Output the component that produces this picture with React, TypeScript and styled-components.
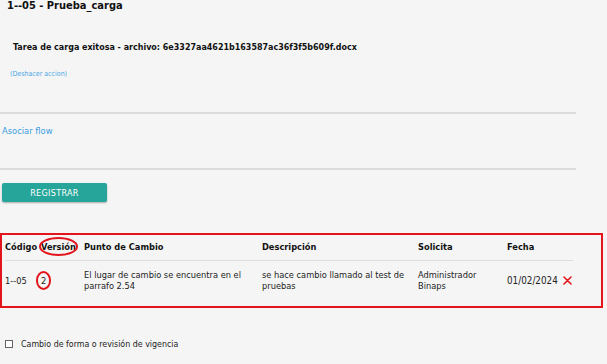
import React from "react";
import styled, { createGlobalStyle } from "styled-components";

const GlobalStyle = createGlobalStyle`
  body {
    margin: 0;
    background: #f5f5f5;
    font-family: "DejaVu Sans Condensed", "DejaVu Sans", Tahoma, sans-serif;
    color: #222;
  }
`;

const Page = styled.div`
  width: 607px;
  height: 364px;
  overflow: hidden;
`;

const Title = styled.div`
  padding-left: 7px;
  font-size: 11px;
  font-weight: bold;
  line-height: 12px;
  color: #111;
`;

const Notice = styled.div`
  margin-top: 29px;
  padding-left: 13px;
  font-size: 8.9px;
  font-weight: bold;
  line-height: 12px;
  color: #111;
`;

const UndoLink = styled.a`
  display: block;
  margin-top: 15px;
  padding-left: 10px;
  font-size: 7px;
  line-height: 12px;
  color: #4aa6e6;
  text-decoration: none;
`;

const Divider = styled.hr<{ $gap: number }>`
  width: 576px;
  margin: ${({ $gap }) => $gap}px 0 0 0;
  border: none;
  border-top: 2px solid #dcdcdc;
  height: 0;
`;

const FlowLink = styled.a`
  display: block;
  margin-top: 11px;
  padding-left: 2px;
  font-size: 9.3px;
  line-height: 12px;
  color: #3a9de0;
  text-decoration: none;
`;

const SubmitButton = styled.button`
  display: block;
  margin: 13px 0 0 2px;
  width: 105px;
  height: 19px;
  padding: 0;
  border: none;
  border-radius: 2px;
  background: #26a69a;
  box-shadow: 0 1px 2px rgba(0, 0, 0, 0.3);
  color: #fff;
  font-family: inherit;
  font-size: 9px;
  letter-spacing: 0.3px;
`;

const TableFrame = styled.div`
  margin-top: 31px;
  width: 603px;
  height: 75px;
  box-sizing: border-box;
  border: 2px solid #e3141c;
`;

const Grid = styled.div`
  display: grid;
  grid-template-columns: 36px 43px 178px 156px 89px 66px;
  margin: 0 3px;
  width: 568px;
`;

const HeadCell = styled.div`
  padding: 6px 0 7px;
  font-size: 9.2px;
  font-weight: bold;
  line-height: 12px;
  color: #111;
  border-bottom: 1px solid #dedede;
`;

const Cell = styled.div<{ $pad?: number }>`
  align-self: center;
  padding-right: ${({ $pad }) => $pad ?? 8}px;
  font-size: 9.2px;
  line-height: 11px;
  color: #222;
`;

const RowPad = styled.div`
  grid-column: 1 / -1;
  height: 8px;
`;

const Circled = styled.span<{ $x: number; $y: number }>`
  position: relative;
  &::after {
    content: "";
    position: absolute;
    left: -${({ $x }) => $x}px;
    right: -${({ $x }) => $x}px;
    top: -${({ $y }) => $y}px;
    bottom: -${({ $y }) => $y}px;
    border: 2px solid #e3141c;
    border-radius: 50%;
  }
`;

const DateCell = styled(Cell)`
  display: flex;
  align-items: center;
  gap: 5px;
  padding-right: 0;
  font-size: 9.8px;
`;

const CheckRow = styled.label`
  display: flex;
  align-items: center;
  gap: 8px;
  margin-top: 30px;
  padding-left: 5px;
  font-size: 8.8px;
  line-height: 12px;
  color: #222;
`;

const CheckBox = styled.span`
  width: 8px;
  height: 8px;
  border: 1px solid #666;
  background: #fff;
  box-sizing: border-box;
`;

const DeleteIcon = () => (
  <svg width="9" height="9" viewBox="0 0 9 9">
    <path d="M1 1 L8 8 M8 1 L1 8" stroke="#e3141c" strokeWidth="1.6" strokeLinecap="round" />
  </svg>
);

export default function App() {
  return (
    <Page>
      <GlobalStyle />
      <Title>1--05 - Prueba_carga</Title>
      <Notice>Tarea de carga exitosa - archivo: 6e3327aa4621b163587ac36f3f5b609f.docx</Notice>
      <UndoLink href="#">(Deshacer accion)</UndoLink>
      <Divider $gap={32} />
      <FlowLink href="#">Asociar flow</FlowLink>
      <Divider $gap={31} />
      <SubmitButton>REGISTRAR</SubmitButton>
      <TableFrame>
        <Grid>
          <HeadCell>Código</HeadCell>
          <HeadCell>
            <Circled $x={2} $y={4}>Versión</Circled>
          </HeadCell>
          <HeadCell>Punto de Cambio</HeadCell>
          <HeadCell>Descripción</HeadCell>
          <HeadCell>Solicita</HeadCell>
          <HeadCell>Fecha</HeadCell>
          <RowPad />
          <Cell>1--05</Cell>
          <Cell>
            <Circled $x={5} $y={4}>2</Circled>
          </Cell>
          <Cell>El lugar de cambio se encuentra en el parrafo 2.54</Cell>
          <Cell>se hace cambio llamado al test de pruebas</Cell>
          <Cell $pad={12}>Administrador Binaps</Cell>
          <DateCell>
            01/02/2024
            <DeleteIcon />
          </DateCell>
        </Grid>
      </TableFrame>
      <CheckRow>
        <CheckBox />
        Cambio de forma o revisión de vigencia
      </CheckRow>
    </Page>
  );
}
